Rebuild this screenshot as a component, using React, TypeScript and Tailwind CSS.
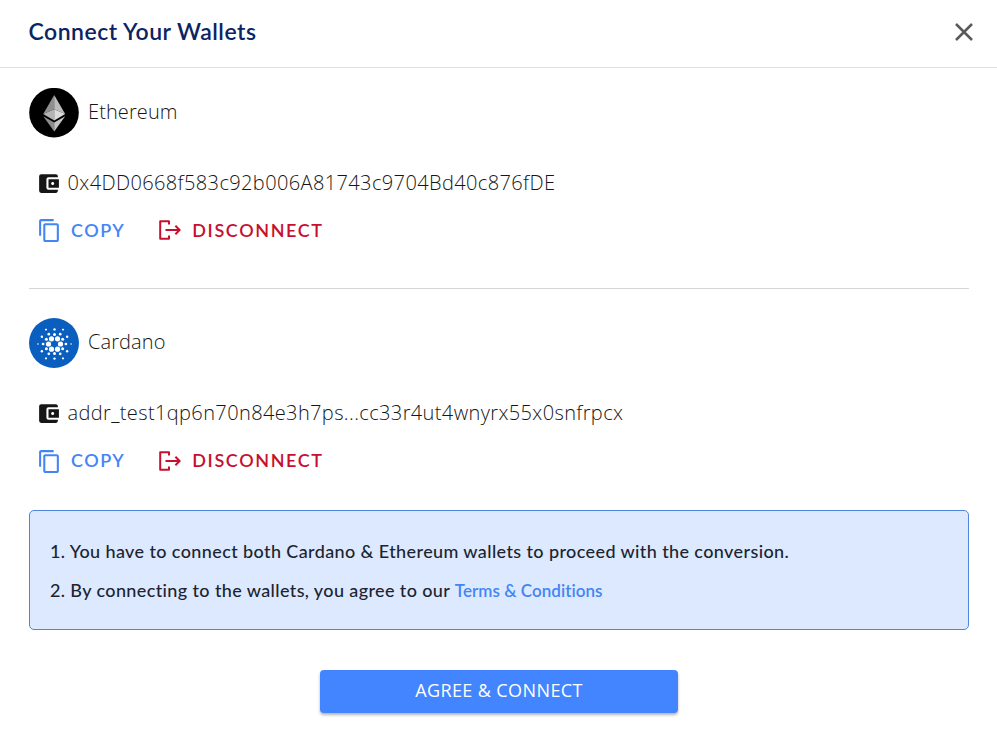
import type { ReactNode } from "react";
import { MdAccountBalanceWallet, MdContentCopy } from "react-icons/md";

function EthereumLogo() {
  return (
    <svg className="size-[50px] shrink-0" viewBox="0 0 50 50">
      <circle cx="25" cy="24.7" r="24.8" fill="#000" />
      <path d="M25.2 7 L14.2 26 L25.2 21.2 Z" fill="#8f8f8f" />
      <path d="M25.2 7 L36.2 26 L25.2 21.2 Z" fill="#bcbcbc" />
      <path d="M14.2 26 L25.2 21.2 V32.4 Z" fill="#b4b4b4" />
      <path d="M36.2 26 L25.2 21.2 V32.4 Z" fill="#dcdcdc" />
      <path d="M14.2 28.2 L25.2 34.6 V43.6 Z" fill="#8c8c8c" />
      <path d="M36.2 28.2 L25.2 34.6 V43.6 Z" fill="#c4c4c4" />
    </svg>
  );
}

const rings = [
  { n: 6, d: 6, r: 2.6, a: 0 },
  { n: 6, d: 9.4, r: 1.5, a: 30 },
  { n: 6, d: 11.4, r: 1.35, a: 0 },
  { n: 6, d: 14.6, r: 1.2, a: 30 },
  { n: 6, d: 16.6, r: 0.8, a: 0 },
];

function CardanoLogo() {
  return (
    <svg className="size-[50px] shrink-0" viewBox="0 0 50 50">
      <circle cx="25" cy="25" r="25" fill="#0a5fbe" />
      {rings.map((g) =>
        Array.from({ length: g.n }, (_, i) => {
          const t = ((g.a + (360 / g.n) * i) * Math.PI) / 180;
          return (
            <circle
              key={`${g.d}-${i}`}
              cx={25.5 + g.d * Math.cos(t)}
              cy={26 + g.d * Math.sin(t)}
              r={g.r}
              fill="#fff"
            />
          );
        }),
      )}
      <g fill="#fff">
        <circle cx="16.8" cy="11.6" r="0.9" />
        <circle cx="34.2" cy="11.6" r="0.9" />
        <circle cx="16.8" cy="40.4" r="0.9" />
        <circle cx="34.2" cy="40.4" r="0.9" />
      </g>
    </svg>
  );
}

function DisconnectIcon() {
  return (
    <svg className="h-[20px] w-[22px]" viewBox="0 0 22 20" fill="none" stroke="currentColor" strokeWidth="2">
      <path d="M10 4.6V1.2H1.2V18.8H10V15.4" strokeLinejoin="round" />
      <path d="M6.5 10H20.5M16.4 5.8L20.6 10L16.4 14.2" />
    </svg>
  );
}

function Wallet({ logo, name, address, nudge }: { logo: ReactNode; name: string; address: string; nudge: string }) {
  return (
    <section className="h-[170px] text-[#161616]">
      <div className="flex h-[50px] items-center gap-[9px] text-[20px]">
        {logo}
        <h2 className="pb-[2px] leading-[48px] tracking-[0.1px]">{name}</h2>
      </div>
      <div className="mt-[30px] ml-[8px] flex h-[30px] items-center gap-[6.5px]">
        <MdAccountBalanceWallet className="size-[25px] -ml-[1px]" />
        <p className="text-[20px] leading-[30px] tracking-[0.38px]">{address}</p>
      </div>
      <div className="mt-[17px] ml-[8px] flex h-[30px] items-center font-[Lato] text-[18px] font-semibold leading-[30px]">
        <button className="flex items-center text-[#4385f5]">
          <MdContentCopy className={`size-[25px] ${nudge}`} />
          <span className="ml-[9px] tracking-[1.5px]">COPY</span>
        </button>
        <button className="ml-[34px] flex items-center text-[#c8102e]">
          <span className={nudge}>
            <DisconnectIcon />
          </span>
          <span className="ml-[11px] tracking-[1.6px]">DISCONNECT</span>
        </button>
      </div>
    </section>
  );
}

export default function App() {
  return (
    <div className="flex h-[749px] w-[997px] flex-col bg-white font-['Open_Sans',sans-serif] font-light text-[#222]">
      <header className="flex h-[68px] items-center justify-between border-b border-[#dfdfdf] pr-[24px] pb-[4px] pl-[28.5px]">
        <h1 className="pb-[1px] font-[Lato] text-[23px] font-semibold tracking-[0.5px] text-[#0b2463]">Connect Your Wallets</h1>
        <button className="text-[#5a5a5a]">
          <svg className="size-[18px]" viewBox="0 0 18 18" fill="none" stroke="currentColor" strokeWidth="2.5">
            <path d="M1 1L17 17M17 1L1 17" />
          </svg>
        </button>
      </header>
      <main className="flex flex-col px-[29px] pr-[28px] pt-[20px]">
        <Wallet logo={<EthereumLogo />} name="Ethereum" address="0x4DD0668f583c92b006A81743c9704Bd40c876fDE" nudge="mt-0" />
        <hr className="mt-[30px] mb-[29px] border-[#d6d6d6]" />
        <Wallet logo={<CardanoLogo />} name="Cardano" address="addr_test1qp6n70n84e3h7ps...cc33r4ut4wnyrx55x0snfrpcx" nudge="mt-[2px]" />
        <div className="mt-[22px] flex h-[120px] flex-col justify-center rounded-[5px] border border-[#4f86dc] bg-[#dde9fe] pl-[20px] font-[Lato] text-[18px] font-medium leading-[39px] text-[#1b2430]">
          <p className="pt-[2px] tracking-[0.39px]">1. You have to connect both Cardano &amp; Ethereum wallets to proceed with the conversion.</p>
          <p className="tracking-[0.38px]">
            2. By connecting to the wallets, you agree to our{" "}
            <a className="text-[17px] font-semibold tracking-[0.05px] text-[#4385f5]">Terms &amp; Conditions</a>
          </p>
        </div>
        <button className="mt-[40px] h-[43px] w-[358px] self-center rounded-[4px] bg-[#4285ff] pb-[2px] text-[18px] font-normal tracking-[0.4px] text-white shadow-[0_2px_3px_rgba(0,0,0,0.3)]">
          AGREE &amp; CONNECT
        </button>
      </main>
    </div>
  );
}
